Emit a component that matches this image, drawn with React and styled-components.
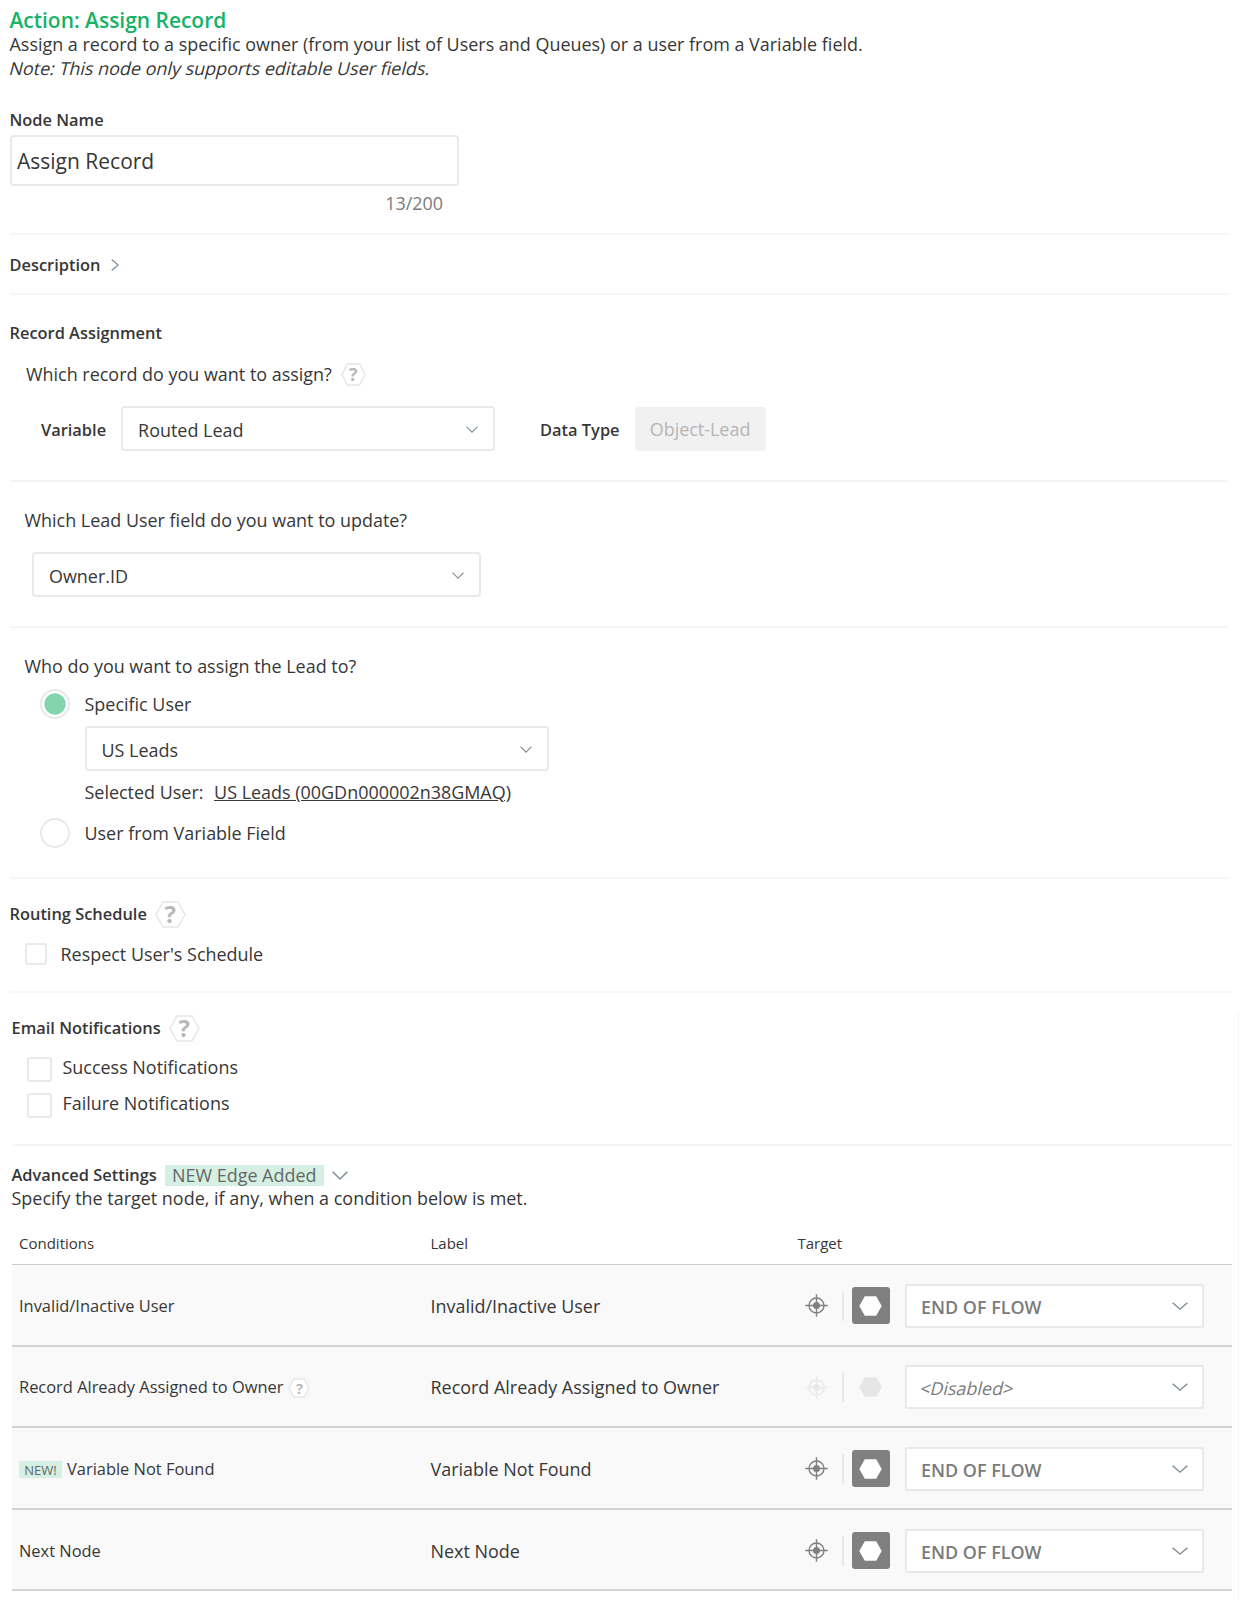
import styled, { createGlobalStyle, css } from 'styled-components';
import React from 'react'

const GlobalStyle = createGlobalStyle`
  * {
    box-sizing: border-box;
  }
  body {
    margin: 0;
    background: #fff;
    color: #373737;
    font-family: 'Open Sans', sans-serif;
    font-size: 17.95px;
    line-height: 24px;
  }
`

const rows = [
  { name: 'Invalid/Inactive User', label: 'Invalid/Inactive User', target: 'END OF FLOW' },
  { name: 'Record Already Assigned to Owner', label: 'Record Already Assigned to Owner', target: '<Disabled>', help: true, disabled: true },
  { name: 'Variable Not Found', label: 'Variable Not Found', target: 'END OF FLOW', isNew: true },
  { name: 'Next Node', label: 'Next Node', target: 'END OF FLOW' },
];

function Chevron({ w = 12, h = 7, right }) {
  return (
    <svg width={w} height={h} viewBox={right ? '0 0 7 12' : '0 0 12 7'} preserveAspectRatio="none" fill="none" stroke="#7d8e99" strokeWidth="1.1">
      {right ? <path d="M.6.5 6.3 6 .6 11.5" /> : <path d="M.5.6 6 6.2 11.5.6" />}
    </svg>
  );
}

function Help({ w = 31, h = 27, size = 24 }) {
  return (
    <HelpWrap $w={w} $h={h}>
      <svg width={w} height={h} viewBox={`0 0 ${w} ${h}`}>
        <polygon
          points={`1,${h / 2} ${w * 0.26},1 ${w * 0.74},1 ${w - 1},${h / 2} ${w * 0.74},${h - 1} ${w * 0.26},${h - 1}`}
          fill="#fff" stroke="#e6e6e6" strokeWidth="1.4"
        />
      </svg>
      <HelpMark $size={size}>?</HelpMark>
    </HelpWrap>
  );
}

function Target({ color }) {
  return (
    <svg width="23" height="23" viewBox="0 0 23 23" fill="none" stroke={color} strokeWidth="1.4">
      <circle cx="11.5" cy="11.5" r="7.5" />
      <circle cx="11.5" cy="11.5" r="3.5" fill={color} stroke="none" />
      <path d="M11.5 .3v22.4M.3 11.5h22.4" />
    </svg>
  );
}

function Hexagon({ color }) {
  return (
    <svg width="23" height="20" viewBox="0 0 23 20">
      <path d="M.3 10 5.8.2h11.4L22.7 10l-5.5 9.8H5.8z" fill={color} />
    </svg>
  );
}

function App() {

  return(
    <Page>
      <GlobalStyle />
      <Main>
        <Header>
          <Title>Action: Assign Record</Title>
          <Text>Assign a record to a specific owner (from your list of Users and Queues) or a user from a Variable field.</Text>
          <Text><Slanted>Note: This node only supports editable User fields.</Slanted></Text>
          <NameLabel>Node Name</NameLabel>
          <NameInput>Assign Record</NameInput>
          <Counter>13/200</Counter>
        </Header>

        <Description>
          <Heading>Description</Heading>
          <Chevron w={8} h={12} right />
        </Description>

        <Assignment>
          <Heading>Record Assignment</Heading>
          <Question>
            Which record do you want to assign?
            <Help w={25} h={23} size={18} />
          </Question>
          <Fields>
            <FieldLabel>Variable</FieldLabel>
            <Select $width={374}>Routed Lead<Chevron /></Select>
            <TypeLabel>Data Type</TypeLabel>
            <DataType>Object-Lead</DataType>
          </Fields>
        </Assignment>

        <UpdateField>
          <Text>Which Lead User field do you want to update?</Text>
          <FieldSelect $width={449}>Owner.ID<Chevron /></FieldSelect>
        </UpdateField>

        <AssignTo>
          <Text>Who do you want to assign the Lead to?</Text>
          <RadioRow $top={11}>
            <Radio $checked />
            Specific User
          </RadioRow>
          <UserBlock>
            <Select $width={464}>US Leads<Chevron /></Select>
            <Selected>Selected User: <UserLink>US Leads (00GDn000002n38GMAQ)</UserLink></Selected>
          </UserBlock>
          <RadioRow $top={14}>
            <Radio />
            User from Variable Field
          </RadioRow>
        </AssignTo>

        <Schedule>
          <HeadingRow>
            <Heading>Routing Schedule</Heading>
            <Help />
          </HeadingRow>
          <CheckRow>
            <Checkbox $size={22} />
            Respect User's Schedule
          </CheckRow>
        </Schedule>
      </Main>

      <Lower>
        <Emails>
          <HeadingRow>
            <Heading>Email Notifications</Heading>
            <Help />
          </HeadingRow>
          <EmailChecks>
            <EmailRow>
              <Checkbox $size={25} />
              <span>Success Notifications</span>
            </EmailRow>
            <EmailRow>
              <Checkbox $size={25} />
              <span>Failure Notifications</span>
            </EmailRow>
          </EmailChecks>
        </Emails>

        <Advanced>
          <AdvancedHead>
            <Heading>Advanced Settings</Heading>
            <EdgeBadge>NEW Edge Added</EdgeBadge>
            <Chevron w={16} h={9} />
          </AdvancedHead>
          <Text>Specify the target node, if any, when a condition below is met.</Text>
        </Advanced>

        <TableHead>
          <span>Conditions</span>
          <span>Label</span>
          <span>Target</span>
        </TableHead>
        {rows.map((row) => (
          <TableRow key={row.name}>
            <Condition>
              {row.isNew && <NewBadge>NEW!</NewBadge>}
              {row.name}
              {row.help && <Help w={22} h={20} size={15} />}
            </Condition>
            <span>{row.label}</span>
            <TargetCell>
              <Target color={row.disabled ? '#e9e9e9' : '#808080'} />
              <Bar />
              <NodeButton $disabled={row.disabled}>
                <Hexagon color={row.disabled ? '#e6e6e6' : '#fff'} />
              </NodeButton>
              <TargetSelect $width={299}>
                {row.disabled ? <Slanted>{row.target}</Slanted> : <TargetName>{row.target}</TargetName>}
                <Chevron w={16} h={8} />
              </TargetSelect>
            </TargetCell>
          </TableRow>
        ))}
      </Lower>
    </Page>
  );

}

export default App;

const Page = styled.div`
  height: 1600px;
  overflow: hidden;
`

const Main = styled.div`
  margin: 0 11px 0 9.5px;
`

const Lower = styled.div`
  margin-right: 1px;
  padding: 0 7px 0 11.5px;
  height: 607px;
  background: linear-gradient(#f5f5f5, #f5f5f5) right 0 top 19px / 1px 100% no-repeat;
`

const Section = styled.section`
  border-bottom: 2px solid #f6f6f6;
`

const Heading = styled.div`
  font-size: 16.4px;
  font-weight: 600;
`

const Text = styled.div`
  font-size: 17.95px;
`

const Slanted = styled.span`
  display: inline-block;
  transform: skewX(-14deg);
`

const Header = styled(Section)`
  height: 235px;
  padding-top: 8px;
`

const Title = styled.h1`
  margin: 0;
  font-size: 20.95px;
  font-weight: 600;
  line-height: 24px;
  color: #17b267;
`

const NameLabel = styled(Heading)`
  margin-top: 28px;
`

const NameInput = styled.div`
  display: flex;
  align-items: center;
  width: 449px;
  height: 51px;
  margin-top: 3px;
  padding-left: 5.5px;
  border: 2px solid #e9e9e9;
  border-radius: 4px;
  font-size: 21px;
`

const Counter = styled.div`
  width: 433.5px;
  margin-top: 5px;
  text-align: right;
  color: #7b7b7b;
`

const Description = styled(Section)`
  display: flex;
  align-items: center;
  gap: 11px;
  height: 60px;
  padding-top: 2px;
`

const Assignment = styled(Section)`
  height: 187px;
  padding-top: 26px;
`

const Question = styled.div`
  display: flex;
  align-items: center;
  gap: 9px;
  margin: 17px 0 0 16.5px;
`

const Fields = styled.div`
  display: flex;
  align-items: center;
  margin: 20px 0 0 31.5px;
  gap: 15px;
`

const FieldLabel = styled(Heading)`
  padding-top: 2px;
`

const Select = styled.div`
  display: flex;
  align-items: center;
  justify-content: space-between;
  width: ${(p) => p.$width}px;
  height: 45px;
  padding: 2px 15px 0 15px;
  border: 2px solid #e9e9e9;
  border-radius: 4px;
  background: #fff;
`

const TypeLabel = styled(FieldLabel)`
  margin-left: 30px;
`

const DataType = styled.div`
  width: 131px;
  height: 44px;
  border-radius: 4px;
  background: #f1f1f1;
  color: #b5b5b5;
  line-height: 44px;
  text-align: center;
`

const UpdateField = styled(Section)`
  height: 146px;
  padding: 26px 0 0 15px;
`

const FieldSelect = styled(Select)`
  margin: 20px 0 0 7.5px;
`

const AssignTo = styled(Section)`
  height: 251px;
  padding: 26px 0 0 15px;
`

const RadioRow = styled.label`
  display: flex;
  align-items: center;
  gap: 15px;
  height: 30px;
  margin: ${(p) => p.$top}px 0 0 15px;
`

const Radio = styled.span`
  width: 30px;
  height: 30px;
  border: 2px solid #e9e9e9;
  border-radius: 50%;
  ${(p) => p.$checked && css`
    background: radial-gradient(circle, #82d5ac 10.3px, #fff 11px);
  `}
`

const UserBlock = styled.div`
  margin: 7px 0 0 60px;
`

const Selected = styled.div`
  margin-top: 8.5px;
`

const UserLink = styled.a`
  margin-left: 6px;
  text-decoration: underline;
`

const Schedule = styled(Section)`
  height: 114px;
  margin-right: -3px;
  padding-top: 21px;
`

const HeadingRow = styled.div`
  display: flex;
  align-items: center;
  gap: 8px;
  height: 28px;
`

const CheckRow = styled.label`
  display: flex;
  align-items: center;
  gap: 14px;
  margin: 14px 0 0 15px;
`

const Checkbox = styled.span`
  flex: none;
  width: ${(p) => p.$size}px;
  height: ${(p) => p.$size}px;
  border: 2px solid #e9e9e9;
  border-radius: 3px;
`

const Emails = styled(Section)`
  height: 153px;
  padding-top: 21px;
`

const EmailChecks = styled.div`
  display: grid;
  gap: 11px;
  margin: 15px 0 0 15px;
`

const EmailRow = styled.label`
  display: flex;
  align-items: flex-start;
  gap: 11px;
  height: 25px;

  span:last-child {
    margin-top: -2px;
  }
`

const Advanced = styled.div`
  height: 84px;
  padding-top: 18px;
`

const AdvancedHead = styled.div`
  display: flex;
  align-items: center;
  gap: 8px;
  height: 22px;
`

const EdgeBadge = styled.span`
  width: 159px;
  height: 21px;
  line-height: 20px;
  text-align: center;
  background: #d5f0e2;
  color: #666;
`

const HelpWrap = styled.span`
  position: relative;
  flex: none;
  width: ${(p) => p.$w}px;
  height: ${(p) => p.$h}px;

  svg {
    display: block;
  }
`

const HelpMark = styled.span`
  position: absolute;
  inset: 0;
  display: flex;
  align-items: center;
  justify-content: center;
  color: #b8b8b8;
  font-size: ${(p) => p.$size}px;
  font-weight: 700;
  line-height: 1;
`

const columns = css`
  display: grid;
  grid-template-columns: 411.5px 367px 1fr;
  padding-left: 7.5px;
`

const TableHead = styled.div`
  ${columns}
  height: 35px;
  padding-top: 1px;
  font-size: 15px;
  border-bottom: 1px solid #cdcdcd;
`

const TableRow = styled.div`
  ${columns}
  align-items: center;
  height: 81.6px;
  padding-top: 2px;
  background: #f9f9f9;
  border-bottom: 2px solid #d3d3d3;
`

const Condition = styled.div`
  display: flex;
  align-items: center;
  gap: 5px;
  font-size: 16.43px;

  ${HelpWrap} {
    margin-top: 2px;
  }
`

const NewBadge = styled.span`
  width: 43px;
  height: 17px;
  margin-top: 1px;
  font-size: 13px;
  line-height: 18px;
  text-align: center;
  background: #d5f0e2;
  color: #666;
`

const TargetCell = styled.div`
  display: flex;
  align-items: center;
  padding-left: 7.5px;
`

const Bar = styled.span`
  width: 2px;
  height: 30px;
  margin: 0 7.5px 0 14px;
  background: #e9e9e9;
`

const NodeButton = styled.span`
  display: flex;
  align-items: center;
  justify-content: center;
  width: 38px;
  height: 37px;
  margin-right: 15px;
  border-radius: 3px;
  background: ${(p) => p.$disabled ? 'transparent' : '#808080'};
`

const TargetName = styled.span`
  font-weight: 600;
`

const TargetSelect = styled(Select)`
  height: 44px;
  padding: 0 14px 0 14.5px;
  border-radius: 2px;
  color: #7b7b7b;

  span {
    padding-top: 2px;
  }
`
